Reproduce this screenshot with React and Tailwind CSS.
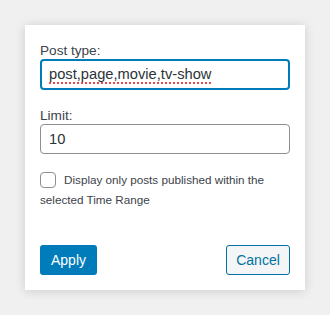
export default function App() {
  return (
    <div
      className="min-h-[315px] w-[330px] bg-[#f0f0f0] pt-[25px] pl-[25px]"
      style={{ fontFamily: '"Liberation Sans", Arial, sans-serif' }}
    >
      <div className="w-[280px] h-[265px] bg-white shadow-[0_1px_10px_rgba(0,0,0,0.15)] px-[15px] pt-[18px] flex flex-col">
        <label className="block text-[13.6px] leading-[16px] text-[#3c434a]">Post type:</label>
        <div className="h-[31px] w-[250px] rounded-[4px] border-2 border-[#007cba] flex items-center px-[7px]">
          <span className="text-[14.7px] text-[#2c3338] underline decoration-dotted decoration-[#e54b4b] decoration-2 underline-offset-[3px]">
            post,page,movie,tv-show
          </span>
        </div>

        <label className="block mt-[18px] text-[13.6px] leading-[16px] text-[#3c434a]">Limit:</label>
        <div className="h-[30px] w-[250px] rounded-[4px] border border-[#8c8f94] flex items-center px-[8px]">
          <span className="text-[14.7px] text-[#2c3338]">10</span>
        </div>

        <div className="mt-[16px] text-[11.7px] leading-[20px] text-[#3c434a]">
          <span className="inline-block align-[-4px] w-[16px] h-[16px] rounded-[4px] border border-[#8c8f94] mr-[8px]" />
          Display only posts published within the selected Time Range
        </div>

        <div className="mt-auto mb-[15px] flex justify-between">
          <button className="h-[30px] w-[57px] rounded-[3px] bg-[#007cba] text-white text-[14px]">Apply</button>
          <button className="h-[30px] w-[64px] rounded-[3px] border border-[#0071a1] bg-[#f3f5f6] text-[#0071a1] text-[14px]">
            Cancel
          </button>
        </div>
      </div>
    </div>
  );
}
